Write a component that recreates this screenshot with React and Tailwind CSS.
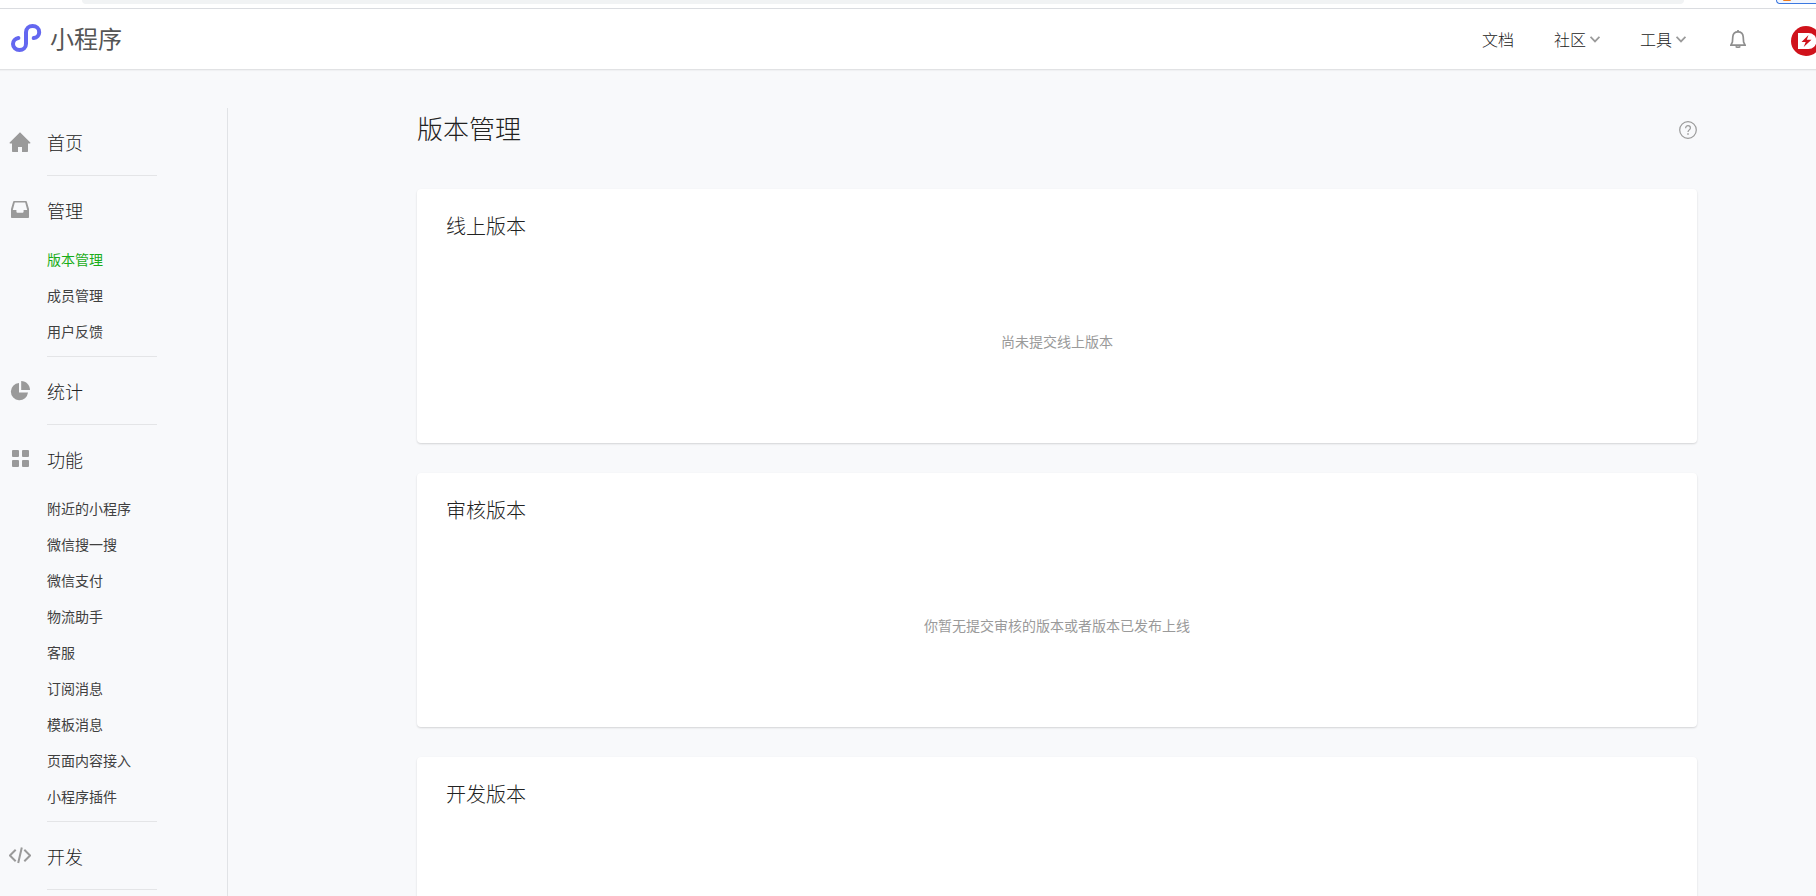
import { Fragment } from "react";

const MENU = [
  { key: "home", label: "首页", icon: HomeIcon },
  { key: "manage", label: "管理", icon: InboxIcon, children: ["版本管理", "成员管理", "用户反馈"] },
  { key: "stats", label: "统计", icon: PieIcon },
  {
    key: "features",
    label: "功能",
    icon: GridIcon,
    children: [
      "附近的小程序",
      "微信搜一搜",
      "微信支付",
      "物流助手",
      "客服",
      "订阅消息",
      "模板消息",
      "页面内容接入",
      "小程序插件"
    ]
  },
  { key: "dev", label: "开发", icon: CodeIcon }
];

const CARDS = [
  { title: "线上版本", empty: "尚未提交线上版本" },
  { title: "审核版本", empty: "你暂无提交审核的版本或者版本已发布上线" },
  { title: "开发版本", empty: "" }
];

const ACTIVE = "版本管理";

function HomeIcon() {
  return (
    <svg width="22" height="22" viewBox="0 0 22 22" fill="#9a9a9a">
      <path d="M11 1.2 21.3 11.6c.3.4.1.8-.3.8H19v7.9c0 .4-.3.7-.7.7H13v-5H9v5H3.7c-.4 0-.7-.3-.7-.7v-7.9H1c-.5 0-.7-.4-.3-.8z" />
    </svg>
  );
}

function InboxIcon() {
  return (
    <svg width="22" height="22" viewBox="0 0 22 22">
      <path
        fill="#9a9a9a"
        fillRule="evenodd"
        d="M5 2h12c.4 0 .7.2.8.6L20 10v8.200c0 .5-.3.800-.8.800H2.800c-.5 0-.8-.3-.8-.800V10l2.200-7.400c.1-.4.400-.6.800-.6zM5.800 3.400 3.800 11h3.600v1.500c0 .8.500 1.300 1.300 1.300h4.600c.8 0 1.300-.5 1.300-1.300V11h3.600l-2-7.600z"
      />
    </svg>
  );
}

function PieIcon() {
  return (
    <svg width="22" height="22" viewBox="0 0 22 22" fill="#9a9a9a">
      <path d="M10 3v9.500h9A8.600 8.600 0 1 1 10 3z" />
      <path d="M12.200 1c5 .2 8.700 4 8.800 9h-8.800z" />
    </svg>
  );
}

function GridIcon() {
  return (
    <svg width="22" height="22" viewBox="0 0 22 22" fill="#9a9a9a">
      <rect x="3" y="2" width="7" height="7" rx="1" />
      <rect x="13" y="2" width="7" height="7" rx="1" />
      <rect x="3" y="12" width="7" height="7" rx="1" />
      <rect x="13" y="12" width="7" height="7" rx="1" />
    </svg>
  );
}

function CodeIcon() {
  return (
    <svg width="22" height="22" viewBox="0 0 22 22" fill="none" stroke="#9a9a9a" strokeWidth="2">
      <path d="M6.700 4.800.9 10.500l5.800 5.700M15.300 4.800l5.800 5.700-5.800 5.700M12.800 2.500 9.200 18" />
    </svg>
  );
}

function Logo() {
  return (
    <svg width="32" height="30" viewBox="0 0 32 30" fill="none" stroke="#6467f0" strokeWidth="4" strokeLinecap="round">
      <path d="M23.700 15.100c3.200-.5 5.500-3 5.500-5.900 0-3.500-2.900-6.200-6.600-6.200S16 5.700 16 9.300v11.400c0 3.600-2.900 6.300-6.500 6.300S3 24.300 3 20.900c0-2.900 2.200-5.400 5.400-5.900" />
    </svg>
  );
}

function Chevron() {
  return (
    <svg width="10" height="7" viewBox="0 0 10 7" fill="none" stroke="#9a9a9a" strokeWidth="1.700">
      <path d="M.6.8 5 5.400 9.400.8" />
    </svg>
  );
}

function BellIcon() {
  return (
    <svg width="16" height="18" viewBox="0 0 16 18" fill="none" stroke="#8e8e8e" strokeWidth="1.700">
      <path d="M8 1.800c-3 0-5 2.200-5.200 5L2.400 12 .9 15.200h14.200L13.600 12l-.4-5.200c-.2-2.800-2.200-5-5.200-5z" />
      <path d="M8 0v2M5.800 16.300c.6 1.300 3.800 1.300 4.400 0" />
    </svg>
  );
}

function HelpIcon() {
  return (
    <svg width="18" height="18" viewBox="0 0 18 18" fill="none" stroke="#9a9a9a" strokeWidth="1.200">
      <circle cx="9" cy="9" r="8.300" />
      <path d="M6.600 7.200c0-1.500 1-2.500 2.400-2.500s2.400.9 2.400 2.200c0 1.900-2.400 2-2.400 4.100" />
      <path d="M9 12.300v1.500" strokeWidth="1.500" />
    </svg>
  );
}

function Avatar() {
  return (
    <svg width="30" height="30" viewBox="0 0 30 30">
      <circle cx="15" cy="15" r="15" fill="#d0121b" />
      <path d="M7 7h10.500a8 8 0 0 1 0 16H7z" fill="#fff" />
      <path d="M17.500 9 10.500 16h4.200l-2 5L20.500 13.700h-4.700z" fill="#d0121b" />
    </svg>
  );
}

function BrowserEdge() {
  return (
    <div className="flex h-[9px] shrink-0 items-start border-b border-[#dadce0] bg-white pl-[82px]">
      <div className="h-1 flex-1 rounded-b-xl bg-[#f1f3f4]" />
      <div className="-mr-3 ml-[92px] h-1 w-[52px] rounded-bl-2xl border-b border-l border-[#3b78e0] bg-[#f1f5fd] pl-1.5">
        <div className="h-px w-2 rounded-b-full bg-[#f07a1a]" />
      </div>
    </div>
  );
}

function Header() {
  return (
    <header className="flex h-[61px] shrink-0 items-center border-b border-[#e1e2e4] bg-white pl-2.5 shadow-[0_1px_1px_rgba(0,0,0,0.03)]">
      <a href="#" className="flex items-center gap-2 pb-0.5 text-2xl font-normal text-[#555]">
        <Logo />
        小程序
      </a>
      <nav className="-mr-[5px] ml-auto flex shrink-0 items-center text-base text-[#222]">
        <a href="#" className="mr-10">文档</a>
        <button type="button" className="mr-10 flex items-center gap-1">
          社区
          <Chevron />
        </button>
        <button type="button" className="mr-11 flex items-center gap-1">
          工具
          <Chevron />
        </button>
        <button type="button" aria-label="通知" className="mr-[45px]">
          <BellIcon />
        </button>
        <button type="button" aria-label="账号" className="pt-1">
          <Avatar />
        </button>
      </nav>
    </header>
  );
}

function Sidebar() {
  return (
    <aside className="w-[228px] shrink-0 border-r border-[#e1e3e6]">
      <ul>
        {MENU.map(({ key, label, icon: Icon, children }) => (
          <Fragment key={key}>
            <li>
              <a href="#" className="flex items-center gap-4 pb-[17px] pl-[9px] pt-5 text-lg leading-7 text-[#222]">
                <Icon />
                {label}
              </a>
              {children && (
                <ul className="pb-[5px] pl-[47px]">
                  {children.map((item) => (
                    <li key={item}>
                      <a
                        href="#"
                        className={`block text-sm font-normal leading-9 ${item === ACTIVE ? "text-[#1aad19]" : "text-[#404040]"}`}
                      >
                        {item}
                      </a>
                    </li>
                  ))}
                </ul>
              )}
            </li>
            <li className="ml-[47px] mr-[70px] mt-0.5 h-px bg-[#e4e5e7]" />
          </Fragment>
        ))}
      </ul>
    </aside>
  );
}

function VersionCard({ title, empty }) {
  return (
    <section className="flex h-[254px] shrink-0 flex-col rounded bg-white px-[29px] pt-[22px] shadow-[0_1px_2px_rgba(0,0,0,0.15)]">
      <h3 className="text-xl leading-[30px]">{title}</h3>
      <p className="pt-[90px] text-center text-sm font-normal text-[#9a9a9a]">{empty}</p>
    </section>
  );
}

export default function App() {
  return (
    <div className="flex h-screen flex-col overflow-hidden bg-[#f8f9fb] font-['Noto_Sans_CJK_SC',sans-serif] font-light text-[#222]">
      <BrowserEdge />
      <Header />
      <div className="flex min-h-0 flex-1 pt-[38px]">
        <Sidebar />
        <main className="flex min-w-0 flex-1 flex-col gap-[30px] pl-[189px] pr-[119px]">
          <div className="flex h-[51px] shrink-0 items-start justify-between">
            <h2 className="text-[26px] leading-10">版本管理</h2>
            <button type="button" aria-label="帮助" className="mt-[13px]">
              <HelpIcon />
            </button>
          </div>
          {CARDS.map((card) => (
            <VersionCard key={card.title} {...card} />
          ))}
        </main>
      </div>
    </div>
  );
}
